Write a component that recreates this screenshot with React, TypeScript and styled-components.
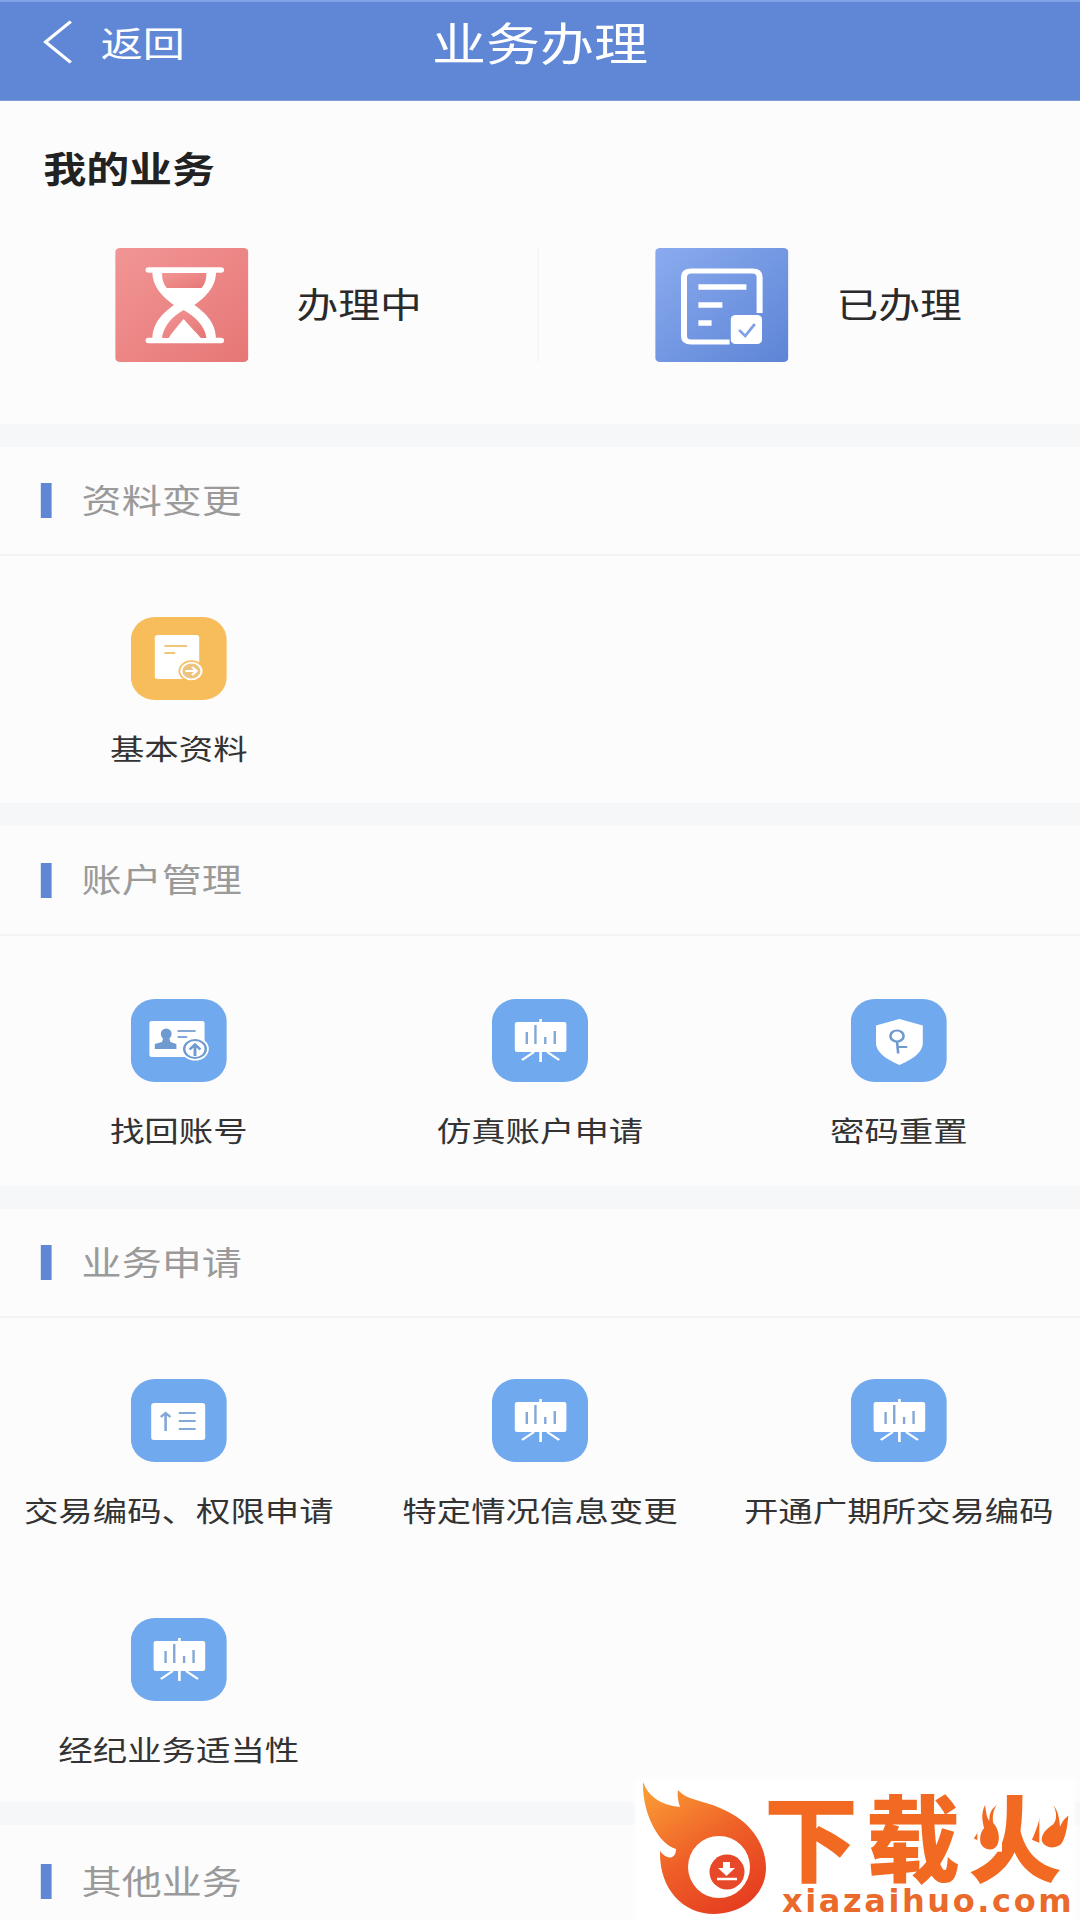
import React from "react";
import styled, { createGlobalStyle } from "styled-components";

const CJK = `"Noto Sans CJK SC", "Noto Sans", sans-serif`;

const Global = createGlobalStyle`
  html, body { margin: 0; padding: 0; background: #fcfcfd; }
  body { font-family: ${CJK}; }
`;

const Viewport = styled.div`
  position: relative;
  width: 1080px;
  height: 1920px;
  overflow: hidden;
  background: #fcfcfd;
`;

/* The screen is laid out on a 900-wide canvas and widened to the device width. */
const Canvas = styled.div`
  width: 900px;
  transform: scaleX(1.2);
  transform-origin: left top;
`;

const Header = styled.header`
  display: grid;
  grid-template-columns: 1fr auto 1fr;
  align-items: center;
  box-sizing: border-box;
  height: 101px;
  padding: 0 36px 18px;
  background: #5f87d6;
  border-top: 2px solid #7fa3e6;
  border-bottom: 1px solid #7c9bd8;
  color: #fff;
`;

const BackLink = styled.div`
  display: flex;
  align-items: center;
  gap: 24px;
  font-size: 35px;
  line-height: 48px;
`;

const HeaderTitle = styled.h1`
  margin: 0;
  font-size: 45px;
  font-weight: 400;
  line-height: 60px;
`;

const Mine = styled.section`
  padding: 42px 0 62px;
`;

const MineTitle = styled.h2`
  margin: 0 0 57px 36px;
  font-size: 35.8px;
  font-weight: 700;
  line-height: 48px;
  color: #222;
`;

const MineRow = styled.div`
  display: grid;
  grid-template-columns: 449px 451px;
`;

const MineCard = styled.div<{ $divided?: boolean }>`
  display: flex;
  align-items: center;
  gap: 40px;
  padding-left: ${(p) => (p.$divided ? 96 : 97)}px;
  height: 114px;
  border-right: ${(p) => (p.$divided ? "1px solid #f1f2f4" : "none")};
  font-size: 34.8px;
  color: #2a2a2a;
`;

const MineLabel = styled.span`
  line-height: 46px;
  padding-bottom: 4px;
`;

const Band = styled.div`
  height: 23px;
  background: #f6f7f9;
`;

const SectionHead = styled.div<{ $height: number }>`
  display: flex;
  align-items: center;
  gap: 25px;
  box-sizing: border-box;
  height: ${(p) => p.$height}px;
  padding-left: 34px;
  border-bottom: 2px solid #f3f3f5;
  font-size: 33.4px;
  color: #9a9a9a;
`;

const SectionName = styled.span`
  line-height: 44px;
  padding-bottom: 4px;
`;

const Marker = styled.i`
  display: block;
  width: 9px;
  height: 35px;
  background: #5f87d6;
`;

const Grid = styled.div<{ $top: number; $bottom: number }>`
  display: grid;
  grid-template-columns: 298px 304px 294px;
  row-gap: 91px;
  padding: ${(p) => p.$top}px 0 ${(p) => p.$bottom}px;
`;

const Item = styled.div`
  display: flex;
  flex-direction: column;
  align-items: center;
  gap: 31px;
`;

const Label = styled.span`
  font-size: 28.7px;
  line-height: 34px;
  color: #333;
  white-space: nowrap;
`;

const TileSvg = styled.svg`
  display: block;
  width: 80px;
  height: 83px;
`;

const BigTile = styled.svg`
  display: block;
  width: 111px;
  height: 114px;
`;

const Watermark = styled.div`
  position: absolute;
  left: 637px;
  top: 1780px;
  width: 436px;
  height: 140px;
  display: flex;
  background: #fff;
  box-shadow: 0 0 6px 2px #fff;
`;

const WatermarkLogo = styled.svg`
  position: absolute;
  left: -17px;
  top: -20px;
  width: 153px;
  height: 160px;
`;

const WatermarkText = styled.div`
  display: flex;
  flex-direction: column;
  align-items: flex-start;
  margin-left: 127px;
  color: #f26a22;
  font-weight: 900;
  white-space: nowrap;
`;

const WatermarkName = styled.div`
  font-size: 94px;
  line-height: 96px;
  letter-spacing: 8px;
  margin-top: 6px;
`;

const WatermarkDomain = styled.div`
  font-family: "DejaVu Sans", sans-serif;
  font-size: 32px;
  font-weight: 700;
  line-height: 34px;
  letter-spacing: 2.6px;
  margin: 2px 0 0 18px;
  color: #ea6a2c;
`;

const SmallFlames = styled.svg`
  position: absolute;
  left: 323px;
  top: 15px;
  width: 115px;
  height: 100px;
`;

const BLUE = "#70a9ee";
const INK = "#6e9ad0";
const BAR = "#83a8d6";

const BlueTile = ({ children }: { children: React.ReactNode }) => (
  <TileSvg viewBox="0 0 80 83">
    <rect width="80" height="83" rx="20" ry="23" fill={BLUE} />
    {children}
  </TileSvg>
);

const IdCardIcon = () => (
  <BlueTile>
    <rect x="15.500" y="22" width="46" height="36" rx="2" fill="#fff" />
    <ellipse cx="29.500" cy="35" rx="4.500" ry="5.500" fill={INK} />
    <path d="M27 39h5l1 4 5 2v5H20v-5l6-2z" fill={INK} />
    <path d="M39 32h15M39 38h8" stroke={BAR} strokeWidth="2" />
    <circle cx="53.500" cy="50" r="11.500" fill="#fff" />
    <circle cx="53.500" cy="50" r="9" fill="none" stroke={INK} strokeWidth="2" />
    <path d="M53.500 57v-11M49 50.500l4.500-5 4.500 5" fill="none" stroke={INK} strokeWidth="2.400" />
  </BlueTile>
);

const BoardIcon = () => (
  <BlueTile>
    <rect x="19" y="23" width="43" height="30" rx="2" fill="#fff" />
    <path d="M40.500 20v4M40.500 53v10M35 53l-10 8M46 53l10 8" stroke="#fff" strokeWidth="2.200" />
    <path d="M29 33v12M36.200 26v19M44.400 38v7M52.300 32v13" stroke={BAR} strokeWidth="2" />
  </BlueTile>
);

const ShieldIcon = () => (
  <BlueTile>
    <path d="M40.500 20L60 26.500V44C60 54 50 61 40.500 66C31 61 21 54 21 44V26.500Z" fill="#fff" />
    <circle cx="38.500" cy="37" r="5.500" fill="none" stroke={INK} strokeWidth="2.200" />
    <path d="M38.500 42.500l1 12M39 48h8" fill="none" stroke={INK} strokeWidth="2.200" />
  </BlueTile>
);

const ListIcon = () => (
  <BlueTile>
    <rect x="17" y="24" width="45" height="37" rx="2.500" fill="#fff" />
    <path d="M29 52V34M25 38l4-4 4 4" fill="none" stroke={BAR} strokeWidth="2.200" />
    <path d="M40 34h14M40 42h14M40 50h14" stroke={BAR} strokeWidth="2.200" />
  </BlueTile>
);

const SheetIcon = () => (
  <TileSvg viewBox="0 0 80 83">
    <rect width="80" height="83" rx="20" ry="23" fill="#f8bd5b" />
    <rect x="20" y="18" width="37" height="44" rx="2.500" fill="#fff" />
    <path d="M28 29h19M28 36h9" stroke="#f1c67c" strokeWidth="2" />
    <circle cx="50.500" cy="54" r="10" fill="#fff" stroke="#f8bd5b" strokeWidth="1.500" />
    <circle cx="50.500" cy="54" r="7.500" fill="#ecc47f" />
    <path d="M45.500 54h9M51 50l4 4-4 4" fill="none" stroke="#fff" strokeWidth="1.800" />
  </TileSvg>
);

const HourglassTile = () => (
  <BigTile viewBox="0 0 111 114">
    <defs>
      <linearGradient id="pink" x1="0" y1="0" x2="1" y2="1">
        <stop offset="0" stopColor="#f29595" />
        <stop offset="1" stopColor="#e67776" />
      </linearGradient>
    </defs>
    <rect width="111" height="114" rx="4" fill="url(#pink)" />
    <path d="M28 22h60M28 92.500h60" stroke="#fff" strokeWidth="5.500" strokeLinecap="round" />
    {/* glass silhouette */}
    <path d="M31 24 C31 40 41 50 49 57 C41 64 31 74 31 91 H84 C84 74 74 64 66 57 C74 50 84 40 84 24Z" fill="#fff" />
    {/* empty upper chamber */}
    <path d="M39 25 H76 C76 31 75 36 72 40 H43 C40 36 39 31 39 25Z" fill="url(#pink)" />
    {/* lower chamber and the heap of sand inside it */}
    <path d="M57 62 C48 68 40 78 39 90 H76 C75 78 66 68 57 62Z" fill="url(#pink)" />
    <path d="M57 71 C52 78 47 85 44 91 H72 C68 85 62 78 57 71Z" fill="#fff" />
  </BigTile>
);

const RecordTile = () => (
  <BigTile viewBox="0 0 111 114">
    <defs>
      <linearGradient id="blue" x1="0" y1="0" x2="1" y2="1">
        <stop offset="0" stopColor="#8aabee" />
        <stop offset="1" stopColor="#5d84d6" />
      </linearGradient>
    </defs>
    <rect width="111" height="114" rx="4" fill="url(#blue)" />
    <path
      d="M62 94H30c-4 0-6-2-6-6V29c0-4 2-6 6-6h51c4 0 6 2 6 6v36"
      fill="none"
      stroke="#fff"
      strokeWidth="5"
    />
    <path d="M36 39h40M36 57h20M36 75h11" stroke="#fff" strokeWidth="5.500" />
    <rect x="63" y="67" width="26" height="29" rx="4" fill="#fff" />
    <path d="M70 82l5 6 8-12" fill="none" stroke="#7fa2e6" strokeWidth="2.400" />
  </BigTile>
);

const BackChevron = () => (
  <svg width="24" height="44" viewBox="0 0 24 44" aria-hidden="true">
    <path d="M23 1.500 2 22l21 20.500" fill="none" stroke="#fff" strokeWidth="3" />
  </svg>
);

const FlameLogo = () => (
  <WatermarkLogo viewBox="0 0 153 160">
    <defs>
      <linearGradient id="flame" x1="0.1" y1="0" x2="0.7" y2="1">
        <stop offset="0" stopColor="#fb9d35" />
        <stop offset="0.55" stopColor="#ee5f28" />
        <stop offset="1" stopColor="#e63e20" />
      </linearGradient>
    </defs>
    <path
      d="M23 22C28 36 40 45 60 47 C58 41 57 35 58 30 C66 40 82 40 100 48 C130 60 146 84 146 108 C146 135 122 154 94 154 C62 154 39 128 40 91 C46 100 56 100 56 89 C38 84 22 52 23 22Z"
      fill="url(#flame)"
    />
    <circle cx="99" cy="107" r="31" fill="#fff" />
    <circle cx="107" cy="112" r="17.500" fill="#e8482a" />
    <path d="M103 102h7v6h5l-8.500 8-8.500-8h5z" fill="#fff" />
    <path d="M97 119h20" stroke="#fff" strokeWidth="2.500" />
  </WatermarkLogo>
);

const account = [
  { label: "找回账号", icon: <IdCardIcon /> },
  { label: "仿真账户申请", icon: <BoardIcon /> },
  { label: "密码重置", icon: <ShieldIcon /> },
];

const applications = [
  { label: "交易编码、权限申请", icon: <ListIcon /> },
  { label: "特定情况信息变更", icon: <BoardIcon /> },
  { label: "开通广期所交易编码", icon: <BoardIcon /> },
  { label: "经纪业务适当性", icon: <BoardIcon /> },
];

const Tiles = ({
  items,
  top,
  bottom,
}: {
  items: { label: string; icon: React.ReactNode }[];
  top: number;
  bottom: number;
}) => (
  <Grid $top={top} $bottom={bottom}>
    {items.map((it) => (
      <Item key={it.label}>
        {it.icon}
        <Label>{it.label}</Label>
      </Item>
    ))}
  </Grid>
);

const Heading = ({ title, height }: { title: string; height: number }) => (
  <SectionHead $height={height}>
    <Marker />
    <SectionName>{title}</SectionName>
  </SectionHead>
);

export default function App() {
  return (
    <Viewport>
      <Global />
      <Canvas>
        <Header>
          <BackLink>
            <BackChevron />
            返回
          </BackLink>
          <HeaderTitle>业务办理</HeaderTitle>
          <span />
        </Header>

        <Mine>
          <MineTitle>我的业务</MineTitle>
          <MineRow>
            <MineCard $divided>
              <HourglassTile />
              <MineLabel>办理中</MineLabel>
            </MineCard>
            <MineCard>
              <RecordTile />
              <MineLabel>已办理</MineLabel>
            </MineCard>
          </MineRow>
        </Mine>

        <Band />
        <Heading title="资料变更" height={109} />
        <Tiles items={[{ label: "基本资料", icon: <SheetIcon /> }]} top={61} bottom={38} />

        <Band />
        <Heading title="账户管理" height={110} />
        <Tiles items={account} top={63} bottom={39} />

        <Band />
        <Heading title="业务申请" height={109} />
        <Tiles items={applications} top={61} bottom={36} />

        <Band />
        <Heading title="其他业务" height={115} />
      </Canvas>

      <Watermark>
        <FlameLogo />
        <WatermarkText>
          <WatermarkName>下载火</WatermarkName>
          <WatermarkDomain>xiazaihuo.com</WatermarkDomain>
        </WatermarkText>
        <SmallFlames viewBox="0 0 345 300">
          <rect x="52" y="20" width="74" height="150" fill="#fff" />
          <rect x="238" y="20" width="100" height="130" fill="#fff" />
          <path
            d="M75 30C60 60 70 85 72 100C62 110 58 130 62 145C70 165 100 172 112 150C122 130 115 100 100 85C96 65 100 45 110 30C90 45 88 60 88 78C78 65 78 45 75 30Z"
            fill="#f26a22"
          />
          <path
            d="M280 30C292 55 290 75 280 88C262 100 245 115 245 135C250 160 290 165 305 145C315 130 322 100 325 62C310 72 305 85 300 95C298 70 295 50 280 30Z"
            fill="#f26a22"
          />
        </SmallFlames>
      </Watermark>
    </Viewport>
  );
}
